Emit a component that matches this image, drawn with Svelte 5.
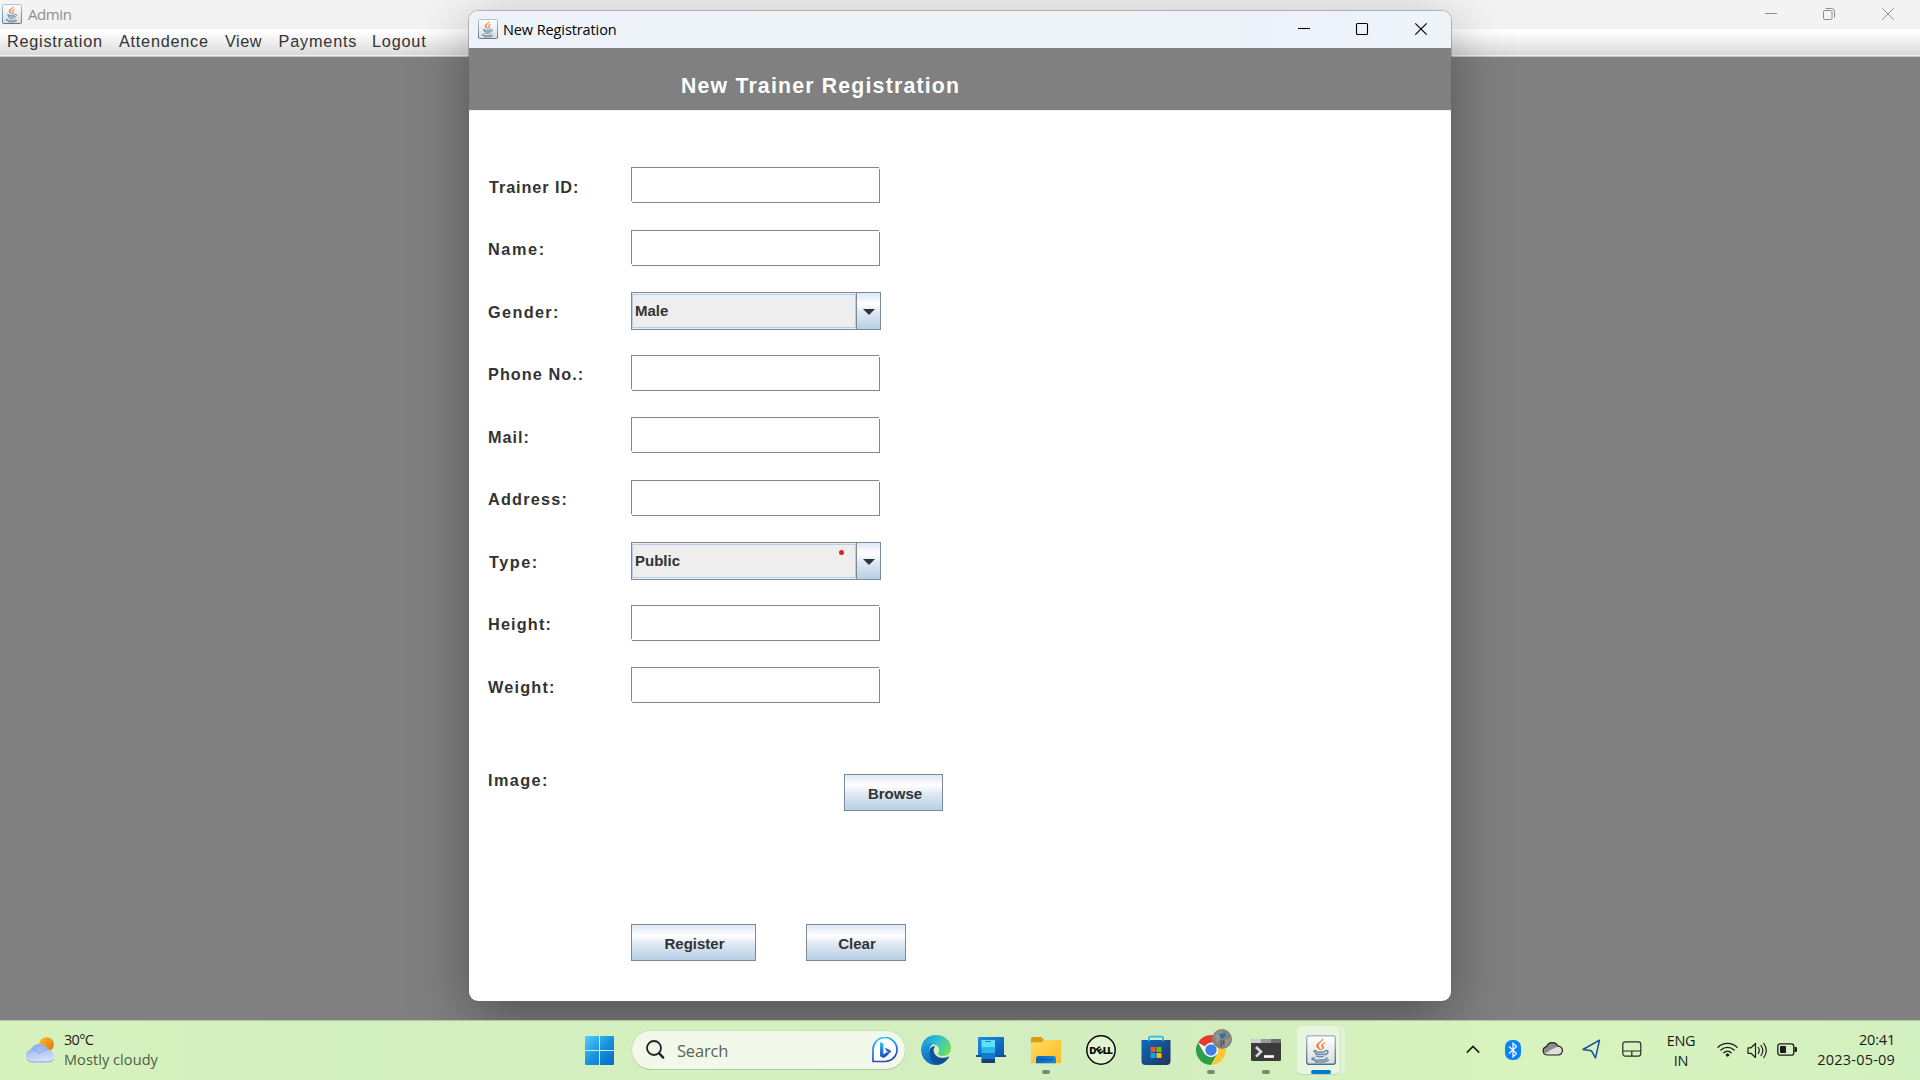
<script>
  // `gap` is the tracking of each text, in pixels
  const menus = [
    { text: 'Registration', gap: 0.75 },
    { text: 'Attendence', gap: 0.75 },
    { text: 'View', gap: 0.5 },
    { text: 'Payments', gap: 0.82 },
    { text: 'Logout', gap: 0.8 }
  ];

  const rows = [
    { label: 'Trainer ID:', gap: 0.9, inset: true },
    { label: 'Name:', gap: 1.6 },
    { label: 'Gender:', gap: 1.35 },
    { label: 'Phone No.:', gap: 1.05 },
    { label: 'Mail:', gap: 1.0 },
    { label: 'Address:', gap: 1.2 },
    { label: 'Type:', gap: 1.5, inset: true },
    { label: 'Height:', gap: 1.15 },
    { label: 'Weight:', gap: 1.2 }
  ];
  const choices = { 'Gender:': 'Male', 'Type:': 'Public' };
</script>

{#snippet java(size)}
  <svg width={size} height={size} viewBox="0 0 30 30">
    <defs>
      <linearGradient id="tile" x1="0" y1="0" x2="0" y2="1">
        <stop offset="0" stop-color="#ffffff" /><stop offset="1" stop-color="#dcdcde" />
      </linearGradient>
      <linearGradient id="rim" x1="0" y1="0" x2="0" y2="1">
        <stop offset="0" stop-color="#a9bccb" /><stop offset="1" stop-color="#4d6f8b" />
      </linearGradient>
    </defs>
    <rect x="0.7" y="0.7" width="28.6" height="28.6" rx="2.2" fill="url(#tile)" stroke="url(#rim)" stroke-width="1.4" />
    <path d="M16.5 3.500c1.400 3-4.700 4.300-4.300 7.300.2 1.700 2 2.800 2.600 4.200-3.200-1.500-5-3.200-4-5.500 1-2.200 5.500-3 5.700-6z" fill="#e8762b" stroke="#e8762b" stroke-width=".5" />
    <path d="M19.200 7.500c-3.200 1.200-4.300 2.600-3.200 4.100.8 1.100.5 2.200-.9 3.400 3.400-1.600 2.800-2.700 1.800-3.900-.8-1.100.1-2.100 2.300-3.600z" fill="#e8762b" stroke="#e8762b" stroke-width=".5" />
    <g fill="none" stroke="#5f85a0" stroke-width="1.400" stroke-linecap="round">
      <path d="M10 15.500c-2 .5-3 1-1 1.400 3 .5 7 .4 10-.3" />
      <path d="M19.500 15.600c3-.8 3.800 2.600-.5 4.200" />
      <path d="M9.500 18.700c1.500 1 6 1 8.700.2M10.500 21c1.600.9 4.800.9 7 .1" />
      <path d="M8.500 22.600c-5 1.200-2.500 2.500 4.500 2.500 6 0 9.500-.9 7.500-2.200" />
      <path d="M9.500 26.800c5 .7 11.500.2 12.800-1.700" />
    </g>
  </svg>
{/snippet}

<div class="desktop">
  <section class="admin">
    <header class="admin-title">
      {@render java(20)}
      <span>Admin</span>
      <svg class="admin-controls" width="130" height="14" viewBox="0 0 130 14" fill="none" stroke="#8c8c8c">
        <path d="M0 6.500h12" />
        <rect x="58.500" y="3.500" width="8.500" height="9" rx="1.300" />
        <path d="M60.500 1.500h6q3 0 3 3v6" />
        <path d="M117.300 1.300l11.400 11.400M128.700 1.300L117.300 12.700" />
      </svg>
    </header>
    <nav class="menubar">
      {#each menus as m}<span style:letter-spacing="{m.gap}px">{m.text}</span>{/each}
    </nav>
    <div class="canvas"></div>
  </section>

  <section class="dialog">
    <header class="dialog-title">
      {@render java(20)}
      <span>New Registration</span>
      <svg class="dialog-controls" width="130" height="14" viewBox="0 0 130 14" fill="none" stroke="#000">
        <path d="M0 6.500h12" stroke-width="1.100" />
        <rect x="58.500" y="1.500" width="11" height="11" rx="1" stroke-width="1.100" />
        <path d="M117.300 1.300l11.400 11.400M128.700 1.300L117.300 12.700" stroke-width="1.200" />
      </svg>
    </header>
    <h1>New Trainer Registration</h1>
    <form onsubmit={(e) => e.preventDefault()}>
      {#each rows as row}
        <div class="row">
          <span class="label" class:inset={row.inset} style:letter-spacing="{row.gap}px">{row.label}</span>
          {#if choices[row.label]}
            <div class="combo">
              <div class="value">{choices[row.label]}</div>
              <div class="drop"><svg width="12" height="6" viewBox="0 0 12 6"><path d="M0 0h12L6 6z" fill="#333" /></svg></div>
              {#if row.label === 'Type:'}<i class="dot"></i>{/if}
            </div>
          {:else}
            <div class="field"></div>
          {/if}
        </div>
      {/each}
      <div class="image-row">
        <span class="label image-label">Image:</span>
        <button class="browse">Browse</button>
      </div>
      <div class="actions">
        <button class="register">Register</button>
        <button class="clear">Clear</button>
      </div>
    </form>
  </section>

  <footer class="taskbar">
    <div class="weather">
      <svg width="30" height="26" viewBox="0 0 30 26">
        <defs>
          <linearGradient id="sun" x1="0" y1="0" x2="1" y2="1"><stop offset="0" stop-color="#fbc02a" /><stop offset="1" stop-color="#ea6a0c" /></linearGradient>
          <linearGradient id="cloud" x1="0" y1="0" x2="0.300" y2="1"><stop offset="0" stop-color="#7fa3e6" /><stop offset="0.600" stop-color="#b3cbf5" /><stop offset="1" stop-color="#d3e0fa" /></linearGradient>
        </defs>
        <circle cx="21.500" cy="7.500" r="7.300" fill="url(#sun)" />
        <path d="M7 25a6.500 6.500 0 0 1-1-12.800A9.500 9.500 0 0 1 23 12.300 6.400 6.400 0 0 1 23.500 25z" fill="url(#cloud)" />
        <path d="M6 12.400q5-.7 8.500 4 3.500-4.500 8.500-4" fill="none" stroke="#7d9fe0" stroke-width="1.200" opacity=".6" />
        <path d="M2 22.500q2 2.500 5 2.500h16.500q4 0 5.500-3" fill="none" stroke="#86a5e8" stroke-width="1" />
      </svg>
      <div><p class="temp">30°C</p><p class="sky">Mostly cloudy</p></div>
    </div>

    <div class="apps">
      <svg class="start" width="30" height="30" viewBox="0 0 30 30">
        <defs><linearGradient id="win" x1="0" y1="0" x2="1" y2="1"><stop offset="0" stop-color="#4fd0fb" /><stop offset="0.500" stop-color="#1a93de" /><stop offset="1" stop-color="#0667c9" /></linearGradient></defs>
        <path d="M1 0h13v14H0V1q0-1 1-1zM15 0h13q1 0 1 1v13H15zM0 15h14v14H1q-1 0-1-1zM15 15h14v13q0 1-1 1H15z" fill="url(#win)" />
      </svg>
      <div class="search">
        <svg width="19" height="20" viewBox="0 0 19 20" fill="none" stroke="#222" stroke-linecap="round"><circle cx="8" cy="8" r="7" stroke-width="1.800" /><path d="M13.200 13.400l4 4.200" stroke-width="2.400" /></svg>
        <span>Search</span>
        <svg class="bing" width="26" height="26" viewBox="0 0 26 26">
          <defs><linearGradient id="bing" x1="0" y1="0" x2="0.300" y2="1"><stop offset="0" stop-color="#31d2ee" /><stop offset="0.500" stop-color="#2583e4" /><stop offset="1" stop-color="#2547bd" /></linearGradient></defs>
          <path d="M1 24.500V13A12 12 0 1 1 13 24.500z" fill="#fff" stroke="url(#bing)" stroke-width="1.700" stroke-linejoin="round" />
          <path d="M8 5l3.400 1.300v11l6.500-3.600q-.3 4.500-6.500 7.300L8 19.300zM12.800 10.500l5 2.200q1.700 1 1 3.300L14.200 14z" fill="url(#bing)" />
        </svg>
      </div>
      <div class="icons">
        <div class="app">
          <svg width="30" height="30" viewBox="0 0 30 30">
            <defs>
              <linearGradient id="edgeA" x1="0" y1="0.200" x2="1" y2="0.600"><stop offset="0" stop-color="#1793dc" /><stop offset="0.500" stop-color="#30c2cf" /><stop offset="1" stop-color="#6ee05a" /></linearGradient>
              <linearGradient id="edgeB" x1="0" y1="0" x2="0.500" y2="1"><stop offset="0" stop-color="#22a0e5" /><stop offset="1" stop-color="#0a62b8" /></linearGradient>
            </defs>
            <path d="M0 14C1 5 7 0 15 0c9 0 15 6 15 13 0 5-3.500 8-8 8-4 0-5.800-1.700-4.700-3.200 2.300-3 .4-7.300-4.300-8.300C7 8.300 2 10 0 14z" fill="url(#edgeA)" />
            <path d="M0 14c2-5 8-6.500 12.500-5.200C9 10 8 14.500 9 18.500c1.300 5.200 6 8.500 10.500 11C8 32 0 24 0 14z" fill="url(#edgeB)" />
            <path d="M9 20c-1.300-4.300.2-9.300 5.200-8.700C10.700 14.500 13 22 20 22.800c3 .4 6-.4 7.500-1.300 1 0 .5 1-.4 2-3 4-7 6.500-11.600 6C12 28.500 10 24 9 20z" fill="#0c4f9c" />
          </svg>
        </div>
        <div class="app">
          <svg width="30" height="30" viewBox="0 0 30 30">
            <defs><linearGradient id="phone" x1="0" y1="0" x2="1" y2="1"><stop offset="0" stop-color="#1e8ee0" /><stop offset="1" stop-color="#0b56ab" /></linearGradient></defs>
            <rect x="2" y="2" width="26" height="19" rx="1" fill="url(#phone)" />
            <path d="M0 20h30v2H0z" fill="#0d539d" />
            <path d="M5.500 5h13.500v8H5.500z" fill="#5ee1fb" /><path d="M5.500 12h13.500v6H5.500z" fill="#2db5ed" /><path d="M5.500 18h13.500v6.500H5.500z" fill="#1579cd" /><path d="M5.500 24h13.500v3.500q0 .5-.5.500H6q-.5 0-.5-.5z" fill="#173f78" />
            <path d="M9.500 6.500h5.500" stroke="#237fae" stroke-width="1" />
          </svg>
        </div>
        <div class="app running">
          <svg width="30" height="30" viewBox="0 0 30 30">
            <defs><linearGradient id="folder" x1="0" y1="0" x2="1" y2="1"><stop offset="0" stop-color="#ffdc63" /><stop offset="1" stop-color="#fdbb24" /></linearGradient><linearGradient id="tray" x1="0" y1="0" x2="1" y2="0"><stop offset="0" stop-color="#0b66bd" /><stop offset="1" stop-color="#1a8ae2" /></linearGradient></defs>
            <path d="M0 3.500Q0 2 1.500 2h8q1 0 1.700.8L13 5h15.500Q30 5 30 6.500V12H0z" fill="#e09b0d" />
            <path d="M0 8.500q0-1.300 1.300-1.300h9.200L13 5h16q1 0 1 1v21q0 1.200-1.200 1.200H1.200Q0 28.200 0 27z" fill="url(#folder)" />
            <path d="M5 28.200v-4.500q0-2.700 2.700-2.700h14.600q2.700 0 2.700 2.700v4.500z" fill="url(#tray)" />
            <path d="M8.500 24.700h13" stroke="#0a4f9a" stroke-width="1.100" stroke-linecap="round" />
          </svg>
        </div>
        <div class="app">
          <svg width="30" height="30" viewBox="0 0 30 30">
            <circle cx="15" cy="15" r="14.200" fill="#def5cf" stroke="#0a0a0a" stroke-width="1.500" />
            <g font-family="Inter, sans-serif" font-weight="900" font-size="9.500" fill="#0a0a0a">
              <text x="3.600" y="18.500">D</text><text x="16.900" y="18.500">L</text><text x="21.400" y="18.500">L</text>
              <text x="-3.200" y="3.400" transform="translate(13.800 15) rotate(-38)">E</text>
            </g>
          </svg>
        </div>
        <div class="app">
          <svg width="30" height="30" viewBox="0 0 30 30">
            <defs><linearGradient id="bag" x1="0" y1="0" x2="1" y2="1"><stop offset="0" stop-color="#0a6cbd" /><stop offset="1" stop-color="#25315c" /></linearGradient></defs>
            <path d="M8 6V3q0-1.300 1.300-1.300h11.400Q22 1.700 22 3v3" fill="none" stroke="#29bdf3" stroke-width="1.700" />
            <path d="M.5 5h29v21q0 4-4 4H4.500Q.5 30 .5 26z" fill="url(#bag)" />
            <path d="M8 6.500V3.500M22 6.500V3.500" stroke="#29bdf3" stroke-width="1.300" />
            <path d="M9.500 12h5v5h-5z" fill="#f35325" /><path d="M15.500 12h5v5h-5z" fill="#7fba00" /><path d="M9.500 18h5v5h-5z" fill="#05a6f0" /><path d="M15.500 18h5v5h-5z" fill="#ffba08" />
          </svg>
        </div>
        <div class="app running">
          <svg width="38" height="38" viewBox="0 -7 38 38" class="chrome">
            <circle cx="15" cy="15" r="15" fill="#fff" />
            <path d="M15 15L2 7.500A15 15 0 0 1 28 7.500H15z" fill="#e33b2e" />
            <path d="M2 7.500A15 15 0 0 0 15 30l6.500-11.300L8.500 18.700z" fill="#2f9e4a" />
            <path d="M28 7.500H15l6.500 11.200L15 30A15 15 0 0 0 28 7.500z" fill="#fcc934" />
            <circle cx="15" cy="15" r="7.200" fill="#fff" /><circle cx="15" cy="15" r="5.700" fill="#3e7eea" />
            <circle cx="26" cy="4" r="10" fill="#85827e" />
            <path d="M19 0q3-4 7-4.500l-2 9-4 4zM29 5l5-2q0 6-5 8.500z" fill="#a09d98" opacity=".7" />
            <path d="M23-2l3 1 3-1.500.5 3-2.500 3h-2.500z" fill="#2477a6" />
            <path d="M25 5.500l1 3-1.500 3.500M27.500 5l.5 4.500" stroke="#50545a" stroke-width="1.300" fill="none" />
          </svg>
        </div>
        <div class="app running">
          <svg width="30" height="30" viewBox="0 0 30 30">
            <rect x="0" y="4" width="30" height="22" rx="1.300" fill="#3b3b3b" />
            <path d="M0 8V5.300Q0 4 1.300 4H10v4z" fill="#cfcfcf" /><path d="M10 4h10v4H10z" fill="#9b9b9b" /><path d="M20 4h8.700Q30 4 30 5.300V8H20z" fill="#6f6f6f" />
            <path d="M5 12l5 4.800L5 21.600" fill="none" stroke="#d9d9d9" stroke-width="2.600" /><path d="M13 21.500h10" stroke="#fff" stroke-width="2.600" />
          </svg>
        </div>
        <div class="app active">{@render java(30)}</div>
      </div>
    </div>

    <div class="tray">
      <svg width="14" height="9" viewBox="0 0 14 9" fill="none" stroke="#1c1c1c" stroke-width="1.600"><path d="M.8 7.600L7 1.400l6.200 6.200" /></svg>
      <svg class="bt" width="16" height="20" viewBox="0 0 16 20"><rect width="16" height="20" rx="7" fill="#0883fb" /><path d="M4 6.500l7.500 7L8 16.800V3.200l3.500 3.300-7.500 7" fill="none" stroke="#fff" stroke-width="1.200" /></svg>
      <svg class="drive" width="21" height="15" viewBox="0 0 21 15"><path d="M5 14a4.200 4.200 0 0 1-.5-8.300A6.200 6.200 0 0 1 16 5.200 4.400 4.400 0 0 1 16 14z" fill="#dedede" /><path d="M4.500 5.700A6.200 6.200 0 0 1 16 5.200L7.500 9.500Q6 12 2 12-.5 7.500 4.500 5.700z" fill="#8c8c8c" /><path d="M5 14a4.200 4.200 0 0 1-.5-8.300A6.200 6.200 0 0 1 16 5.200 4.400 4.400 0 0 1 16 14z" fill="none" stroke="#1f1f1f" stroke-width="1.200" /></svg>
      <svg class="loc" width="19" height="20" viewBox="0 0 19 20"><path d="M17.500 1.200L1 10.500l8.500 1.300 4 7z" fill="none" stroke="#134f9c" stroke-width="1.500" stroke-linejoin="round" /></svg>
      <svg class="pad" width="20" height="16" viewBox="0 0 20 16" fill="none" stroke="#2a2a2a" stroke-width="1.200"><rect x=".8" y=".8" width="18" height="14.300" rx="2.500" /><path d="M1 10h18M9.800 10v5" /></svg>
      <div class="lang"><p>ENG</p><p>IN</p></div>
      <svg class="wifi" width="21" height="15" viewBox="0 0 21 15" fill="none" stroke="#1c1c1c" stroke-width="1.300" stroke-linecap="round"><path d="M1 5.200a13.500 13.500 0 0 1 19 0M3.900 8a9.500 9.500 0 0 1 13.200 0M6.800 10.700a5.400 5.400 0 0 1 7.400 0" /><circle cx="10.500" cy="13" r="1.300" fill="#1c1c1c" stroke-width=".8" /></svg>
      <svg class="vol" width="21" height="17" viewBox="0 0 21 17" fill="none" stroke="#1c1c1c" stroke-width="1.200" stroke-linecap="round" stroke-linejoin="round"><path d="M1 5.800h3L8.500 1.500v14L4 11.300H1z" /><path d="M11.300 5.500q2 3 0 6M14 3.500q3.600 5 0 10M16.800 1.500q5 7 0 14" /></svg>
      <svg class="batt" width="21" height="13" viewBox="0 0 21 13"><rect x=".8" y=".8" width="16" height="11.400" rx="2.500" fill="none" stroke="#1c1c1c" stroke-width="1.300" /><rect x="3" y="3" width="6" height="7" rx=".8" fill="#1c1c1c" /><path d="M17.500 4h1.500q1 0 1 1v3q0 1-1 1h-1.500z" fill="#1c1c1c" /></svg>
      <div class="clock"><p>20:41</p><p class="date">2023-05-09</p></div>
    </div>
  </footer>
</div>

<style>
  :global(body) { overflow: hidden; }
  p, h1 { margin: 0; }
  svg { display: block; flex: none; }
  .desktop { position: relative; width: 1920px; height: 1080px; display: flex; flex-direction: column; overflow: hidden; background: #808080; }

  .admin { height: 1020px; display: flex; flex-direction: column; }
  .admin-title { height: 29px; box-sizing: border-box; padding: 0 25px 2px 2px; display: flex; align-items: center; background: #f3f3f3; color: #8f8f8f; font: 15px/20px "Open Sans", "Noto Sans", sans-serif; }
  .admin-title span { margin-left: 6px; letter-spacing: -0.400px; }
  .admin-controls { margin-left: auto; }
  .menubar { height: 28px; box-sizing: border-box; padding-left: 7px; display: grid; grid-template-columns: 112px 106px 53.500px 93.500px 90px; border-bottom: 1px solid #c4c4c4; background: linear-gradient(#fff 0, #fdfdfd 15%, #dadada 96%, #f3f3f3 97%); color: #333; font: 16.250px/20px "Liberation Sans", Arial, sans-serif; }
  .menubar span { padding-top: 2px; white-space: nowrap; }
  .canvas { flex: 1; background: #808080; }

  .dialog { position: absolute; left: 469px; top: 11px; width: 982px; height: 990px; border-radius: 9px; display: flex; flex-direction: column; background: #fff; box-shadow: 0 0 0 1px rgba(100, 100, 100, .38), 0 18px 60px rgba(0, 0, 0, .36); }
  .dialog-title { height: 37px; box-sizing: border-box; padding: 0 23px 1px 9px; border-radius: 9px 9px 0 0; display: flex; align-items: center; background: linear-gradient(90deg, #edf3f9, #eef3fb 15%, #edf3f7 30%, #edf3f7 65%, #edf2fb 85%, #edf4f9); color: #000; font: 14.500px/20px "Open Sans", "Noto Sans", sans-serif; }
  .dialog-title svg:first-child { margin-top: -1px; }
  .dialog-title span { margin: 1px 0 0 5px; letter-spacing: -0.100px; white-space: nowrap; }
  .dialog-controls { margin-left: auto; }
  h1 { height: 62px; box-sizing: border-box; padding: 25px 0 0 212px; background: #808080; border-bottom: 0; color: #fff; font: bold 21.250px/26px "Liberation Sans", Arial, sans-serif; letter-spacing: 1.200px; white-space: nowrap; box-shadow: 0 1px #eee; }

  form { padding: 57px 0 0 19px; }
  .row { display: flex; height: 62.500px; }
  .label { flex: none; width: 143px; box-sizing: border-box; padding-top: 9.750px; color: #333; font: bold 16.250px/20px "Liberation Sans", Arial, sans-serif; white-space: nowrap; }
  .inset { padding-left: 1px; }
  .field { position: relative; width: 249px; height: 36px; box-sizing: border-box; border: 1px solid #7a8a99; background: #fff; }
  .field::before, .field::after { content: ""; position: absolute; width: 1px; height: 2px; background: #f3f3f3; }
  .field::before { top: -1px; right: -1px; }
  .field::after { bottom: -1px; left: -1px; }
  .combo { position: relative; display: flex; width: 250px; height: 38px; box-sizing: border-box; border: 1px solid #7a8a99; background: #eee; }
  .value { flex: 1; box-sizing: border-box; margin: 1px 0 1px; padding: 7px 0 0 2px; border: 1px solid #b8cfe5; color: #333; font: bold 15px/18px "Liberation Sans", Arial, sans-serif; }
  .drop { width: 23px; display: flex; align-items: center; justify-content: center; border-left: 1px solid #7a8a99; background: linear-gradient(#dde8f3, #fff 30%, #dde8f3 55%, #b8cfe5); }
  .drop svg { margin-top: 2px; }
  .dot { position: absolute; left: 207px; top: 7px; width: 5px; height: 5px; border-radius: 50%; background: #ed1c24; }

  .image-row { display: flex; align-items: flex-start; height: 150px; padding-top: 44.500px; box-sizing: border-box; }
  .image-label { width: 356px; padding-top: 0; margin-top: -4px; letter-spacing: 1.400px; }
  button { flex: none; height: 37px; box-sizing: border-box; margin: 0; padding: 3px 0 0 2px; border: 1px solid #7a8a99; border-radius: 0; background: linear-gradient(#dde8f3, #fff 30%, #dde8f3 55%, #b8cfe5); color: #333; font: bold 15px/18px "Liberation Sans", Arial, sans-serif; }
  .browse { width: 99px; padding-left: 3px; }
  .actions { display: flex; gap: 50px; padding: 44.500px 0 0 143px; }
  .register { width: 125px; }
  .clear { width: 100px; }

  .taskbar { position: relative; height: 60px; box-sizing: border-box; display: grid; grid-template-columns: 585px 1fr 454px; border-top: 1px solid #b3c6a4; background: linear-gradient(90deg, #d7f2bd, #d2efbf 18%, #d5f0bf 35%, #d2eebf 60%, #d8f3bd 80%, #d3f0c0); color: #1b1b1b; font: 14.500px/20px "Open Sans", "Noto Sans", sans-serif; }
  .weather { display: flex; padding: 0 0 0 25px; }
  .weather svg { margin-top: 16px; }
  .weather div { padding: 9px 0 0 9px; }
  .temp { letter-spacing: -0.700px; }
  .sky { color: #4f5d48; letter-spacing: 0.080px; }
  .apps { display: flex; }
  .start { margin-top: 15px; }
  .search { margin: 10px 0 0 17px; width: 273px; height: 38px; box-sizing: border-box; padding: 0 7px 0 14px; display: flex; align-items: center; border-radius: 19px; background: #f2f9eb; box-shadow: 0 1px #b5c9a8, 0 0 0 1px rgba(190, 214, 174, .5); }
  .search span { flex: 1; margin: 2px 0 0 12px; color: #5a6353; font-size: 16.500px; letter-spacing: -0.200px; }
  .icons { display: flex; margin-left: 3px; }
  .app { position: relative; width: 55px; height: 59px; display: flex; justify-content: center; padding-top: 14px; box-sizing: border-box; }
  .chrome { margin: -7px -8px 0 0; }
  .running::after, .active::after { content: ""; position: absolute; bottom: 6px; left: 50%; width: 8px; height: 4px; margin-left: -4px; border-radius: 2px; background: #7b886f; }
  .active::before { content: ""; position: absolute; z-index: -1; left: 4px; top: 5px; width: 43px; height: 48px; border-radius: 5px; background: #e8f6df; box-shadow: 0 1px #c0d6b1, 1px 0 #cfe3c1, 5px 0 #e2f3d7; }
  .active { z-index: 0; }
  .active::after { width: 20px; margin-left: -10px; background: #0078d7; }

  .tray { display: flex; align-items: flex-start; }
  .tray svg:first-child { margin-top: 24px; }
  .tray .bt { margin: 19px 0 0 25px; }
  .tray .drive { margin: 20px 0 0 21px; }
  .tray .loc { margin: 18px 0 0 19px; }
  .tray .pad { margin: 20px 0 0 21px; }
  .lang { width: 40px; margin: 10px 0 0 19px; text-align: center; letter-spacing: -0.300px; }
  .tray .wifi { margin: 21px 0 0 16px; }
  .tray .vol { margin: 21px 0 0 9px; }
  .tray .batt { margin: 22px 0 0 9px; }
  .clock { width: 97px; margin: 9px 0 0; text-align: right; letter-spacing: -0.200px; white-space: nowrap; }
  .date { letter-spacing: 0.200px; }
</style>
